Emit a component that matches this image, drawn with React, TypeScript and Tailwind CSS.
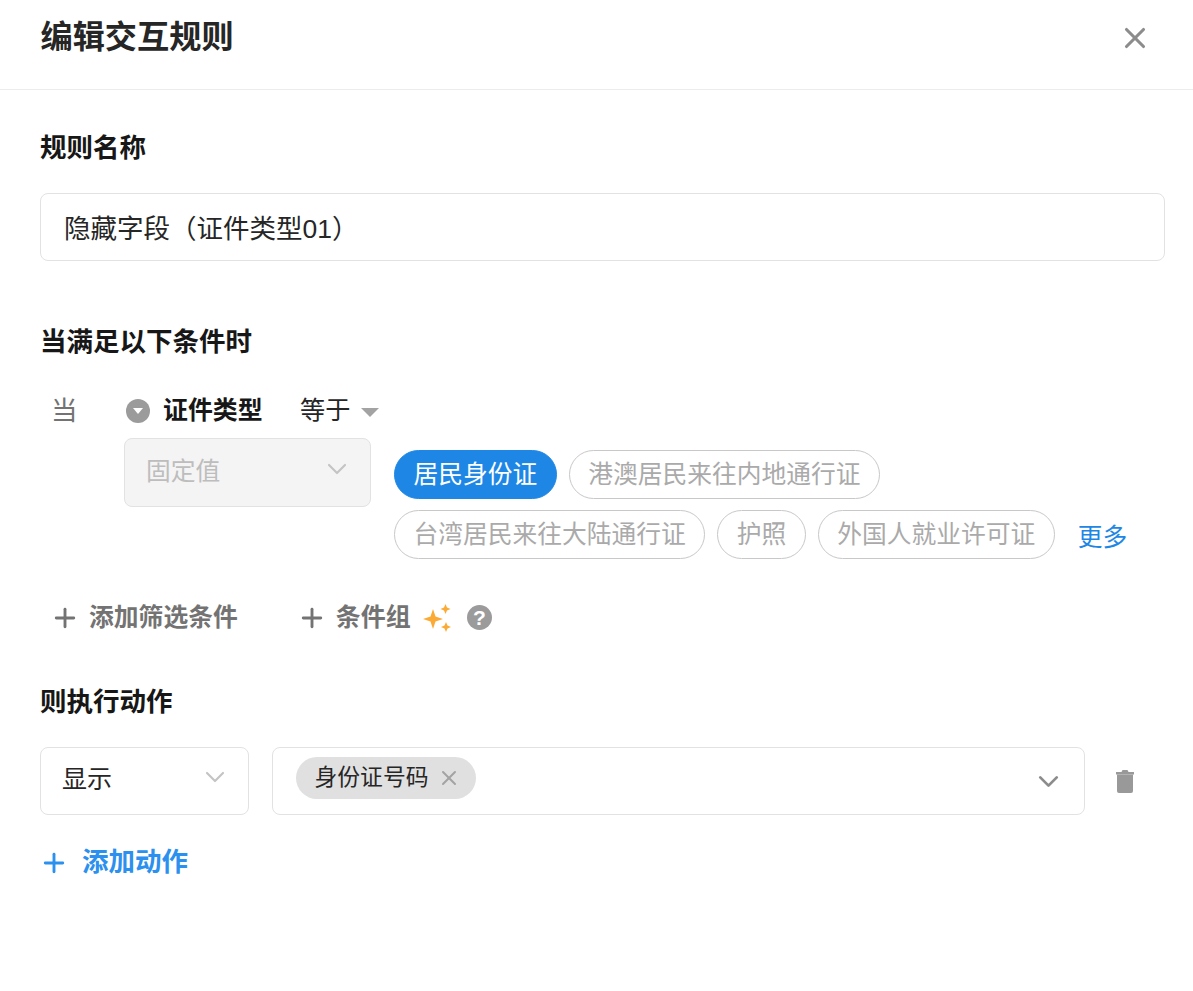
import { ChevronDown, Plus, X } from "lucide-react";

const font = "font-['Liberation_Sans','Noto_Sans_CJK_SC',sans-serif]";

function Tag({ label, active }: { label: string; active?: boolean }) {
  return (
    <span
      className={
        active
          ? "flex h-[49px] items-center rounded-full border border-[#1e87e6] bg-[#1e87e6] px-[18.500px] text-[24.750px] text-white"
          : "flex h-[49px] items-center rounded-full border border-[#c8c8c8] bg-white px-[18.500px] text-[24.750px] text-[#aaaaaa]"
      }
    >
      {label}
    </span>
  );
}

function Sparkles() {
  return (
    <svg width="30" height="30" viewBox="0 0 30 30" fill="#fbab35">
      <path d="M11 6 L13.500 13.500 L21 16 L13.500 18.500 L11 26 L8.500 18.500 L1 16 L8.500 13.500Z" />
      <path d="M23.500 1 L25 4.500 L28.500 6 L25 7.500 L23.500 11 L22 7.500 L18.500 6 L22 4.500Z" />
      <path d="M24 19 L25.500 22.500 L29 24 L25.500 25.500 L24 29 L22.500 25.500 L19 24 L22.500 22.500Z" />
    </svg>
  );
}

export default function App() {
  return (
    <div className={`${font} h-[991px] w-[1193px] overflow-hidden bg-white`}>
      {/* Header */}
      <div className="flex h-[90px] items-start justify-between border-b border-[#ececec] pl-[40.500px] pr-[41px]">
        <h1 className="mt-[14px] text-[32.200px] leading-[46px] font-semibold text-[#262626]">
          编辑交互规则
        </h1>
        <X className="mt-[21px] h-[34px] w-[34px] text-[#8c8c8c]" strokeWidth={2.200} />
      </div>

      <div className="pl-[40px] pr-[28px]">
        {/* Rule name */}
        <h2 className="mt-[39px] text-[26.500px] leading-[38px] font-semibold text-[#171717]">规则名称</h2>
        <div className="mt-[26px] flex h-[68px] items-center rounded-lg border border-[#e2e2e2] pl-[23px] pt-[6px] text-[26.500px] text-[#262626]">
          隐藏字段（证件类型01）
        </div>

        {/* Conditions */}
        <h2 className="mt-[62px] text-[26.500px] leading-[38px] font-semibold text-[#171717]">当满足以下条件时</h2>

        <div className="mt-[30px] flex h-[40px] items-center">
          <span className="ml-[11px] w-[75px] pt-[2px] text-[26.500px] text-[#737373]">当</span>
          <span className="mb-[1px] flex h-[24px] w-[24px] items-center justify-center rounded-full bg-[#9b9b9b]">
            <span className="h-0 w-0 border-x-[5px] border-t-[6px] border-x-transparent border-t-white" />
          </span>
          <span className="ml-[13px] text-[24.900px] font-bold text-[#171717]">证件类型</span>
          <span className="ml-[37.500px] text-[25.200px] text-[#262626]">等于</span>
          <span className="ml-[10.500px] mt-[2px] h-0 w-0 border-x-[9px] border-t-[9px] border-x-transparent border-t-[#a3a3a3]" />
        </div>

        <div className="mt-[7px] ml-[84px] flex items-start">
          <div className="flex h-[69px] w-[247px] shrink-0 items-center justify-between rounded-lg border border-[#e2e2e2] bg-[#f4f4f4] pl-[21px] pr-[17px]">
            <span className="pb-[2px] text-[24.750px] text-[#bdbdbd]">固定值</span>
            <ChevronDown className="mb-[8px] h-[32px] w-[32px] text-[#c4c4c4]" strokeWidth={1.600} />
          </div>
          <div className="ml-[23px] mt-[12px] flex flex-col gap-[11px]">
            <div className="flex gap-[12px]">
              <Tag label="居民身份证" active />
              <Tag label="港澳居民来往内地通行证" />
            </div>
            <div className="flex items-center gap-[12px]">
              <Tag label="台湾居民来往大陆通行证" />
              <Tag label="护照" />
              <Tag label="外国人就业许可证" />
              <span className="ml-[11px] pt-[6px] text-[24.750px] text-[#1e87e6]">更多</span>
            </div>
          </div>
        </div>

        {/* Add filter */}
        <div className="mt-[39px] flex h-[40px] items-center text-[#737373]">
          <Plus className="ml-[10px] h-[30px] w-[30px]" strokeWidth={2.300} />
          <span className="ml-[9px] text-[24.800px] font-bold">添加筛选条件</span>
          <Plus className="ml-[59px] h-[30px] w-[30px]" strokeWidth={2.300} />
          <span className="ml-[9px] text-[25px] font-bold">条件组</span>
          <span className="ml-[11px] flex">
            <Sparkles />
          </span>
          <span className="mb-[1px] ml-[15px] flex h-[25px] w-[25px] items-center justify-center rounded-full bg-[#9b9b9b] text-[21px] leading-none font-bold text-white">
            ?
          </span>
        </div>

        {/* Actions */}
        <h2 className="mt-[45px] text-[26.500px] leading-[38px] font-semibold text-[#171717]">则执行动作</h2>
        <div className="mt-[26px] flex items-center">
          <div className="flex h-[68px] w-[209px] items-center justify-between rounded-lg border border-[#e2e2e2] pl-[21px] pr-[17px]">
            <span className="pb-[2px] text-[25px] text-[#262626]">显示</span>
            <ChevronDown className="mb-[8px] h-[32px] w-[32px] text-[#c4c4c4]" strokeWidth={1.600} />
          </div>
          <div className="ml-[23px] flex h-[68px] w-[813px] items-start justify-between rounded-lg border border-[#e2e2e2] pl-[23px] pr-[19px]">
            <span className="mt-[9px] flex h-[42px] w-[180px] items-center rounded-full bg-[#e0e0e0] pl-[18.500px] text-[22.800px] text-[#262626]">
              <span className="pb-[2px]">身份证号码</span>
              <X className="ml-[9px] h-[24px] w-[24px] text-[#a3a3a3]" strokeWidth={2} />
            </span>
            <ChevronDown className="mt-[17px] h-[33px] w-[33px] text-[#8c8c8c]" strokeWidth={2} />
          </div>
          <svg className="ml-[31px]" width="18" height="23" viewBox="0 0 18 23" fill="#999999">
            <path d="M0 2h5.500l1-2h5l1 2H18v2.500H0z" />
            <path d="M1 4.500h16V21a2 2 0 0 1-2 2H3a2 2 0 0 1-2-2z" />
          </svg>
        </div>

        <div className="mt-[28px] flex h-[40px] items-center text-[#2b90ee]">
          <Plus className="ml-[-1px] h-[30px] w-[30px]" strokeWidth={2.300} />
          <span className="ml-[13px] text-[26.500px] font-bold">添加动作</span>
        </div>
      </div>
    </div>
  );
}
